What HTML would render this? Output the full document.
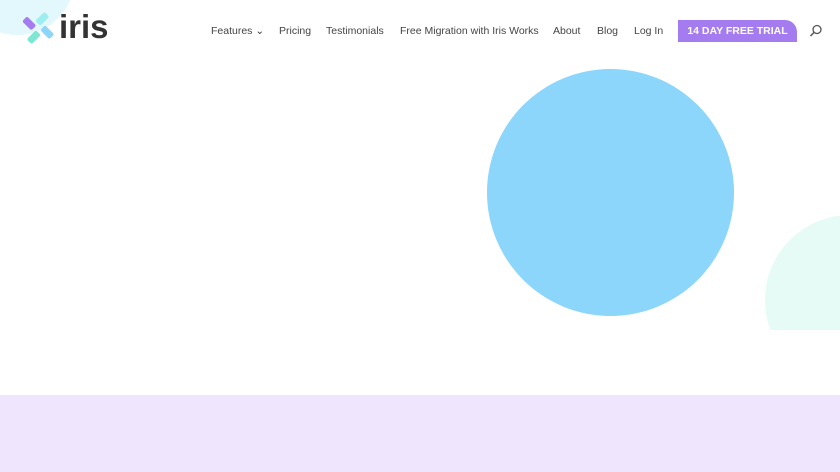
<!DOCTYPE html>
<html><head><style>
body{margin:0;width:840px;height:472px;overflow:hidden;background:#fff;font-family:"Liberation Sans",sans-serif;position:relative}
.blob{position:absolute;left:-40px;top:-80px;width:115px;height:115px;border-radius:50%;background:#e3f8fc}
.nav{position:absolute;top:25px;font-size:10.5px;color:#444}
.nav span{position:absolute;white-space:nowrap}
.btn{position:absolute;left:678px;top:20px;width:119px;height:22px;background:#a57cf0;color:#fff;font-size:10.5px;font-weight:bold;line-height:22px;text-align:center;border-radius:0 12px 0 0}
.c1{position:absolute;left:487px;top:69px;width:247px;height:247px;border-radius:50%;background:#8cd5fb}
.c2wrap{position:absolute;left:760px;top:200px;width:80px;height:130px;overflow:hidden}
.c2{position:absolute;left:5px;top:15px;width:170px;height:170px;border-radius:50%;background:#e6fbf6}
.band{position:absolute;left:0;top:395px;width:840px;height:77px;background:#efe6fd}
</style></head><body>
<div class="blob"></div>
<svg style="position:absolute;left:21px;top:11px" width="34" height="34" viewBox="0 0 34 34">
<g transform="rotate(-45 17 17)">
<rect x="14" y="1" width="7" height="13" rx="2" fill="#a57cf0" transform="translate(-3.5 0)"/>
<rect x="20" y="13.5" width="13" height="7" rx="2" fill="#9eeef0" transform="translate(0 -3.5)"/>
<rect x="1" y="13.5" width="13" height="7" rx="2" fill="#7ee7d3" transform="translate(0 3.5)"/>
<rect x="13.5" y="20" width="7" height="13" rx="2" fill="#8cd5fb" transform="translate(3.5 0)"/>
</g>
</svg>
<div style="position:absolute;left:59px;top:8px;font-size:33px;font-weight:bold;color:#333;line-height:38px">iris</div>
<div class="nav">
<span style="left:211px">Features &#8964;</span>
<span style="left:279px">Pricing</span>
<span style="left:326px">Testimonials</span>
<span style="left:400px">Free Migration with Iris Works</span>
<span style="left:553px">About</span>
<span style="left:597px">Blog</span>
<span style="left:634px">Log In</span>
</div>
<div class="btn">14 DAY FREE TRIAL</div>
<svg style="position:absolute;left:809px;top:24px" width="14" height="14" viewBox="0 0 14 14"><circle cx="8" cy="5.5" r="4" fill="none" stroke="#555" stroke-width="1.3"/><line x1="5" y1="8.5" x2="1.5" y2="12" stroke="#555" stroke-width="1.5"/></svg>
<div class="c1"></div>
<div class="c2wrap"><div class="c2"></div></div>
<div class="band"></div>
</body></html>
